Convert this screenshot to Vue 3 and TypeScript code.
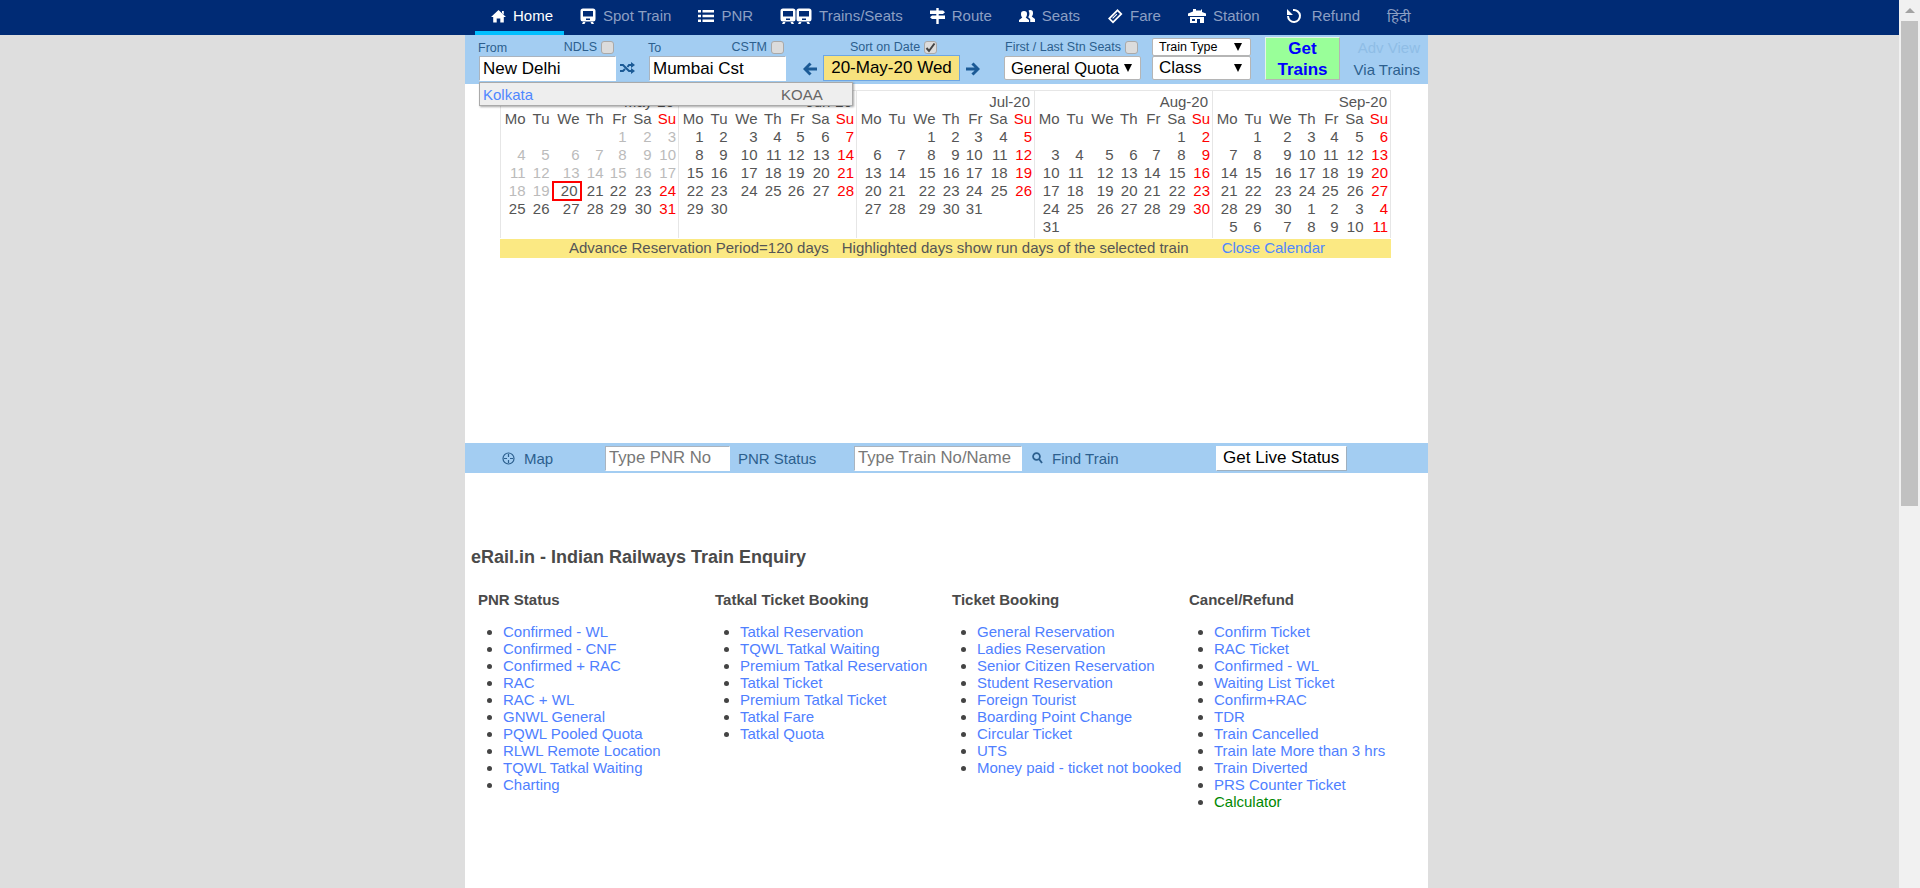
<template>
  <div class="screen">
    <div class="viewport">
      <header class="topbar">
        <nav class="nav">
          <a v-for="item in navItems" :key="item.label" class="nav-item" :class="{ active: item.active }" href="#">
            <svg v-if="item.d" class="nav-icon" :width="item.w" height="16" :viewBox="`0 0 ${item.vw} 16`" fill="currentColor">
              <path :d="item.d" fill-rule="evenodd" />
            </svg>
            <span>{{ item.label }}</span>
          </a>
        </nav>
      </header>

      <main class="page">
        <form class="query-bar" @submit.prevent>
          <div class="field">
            <div class="label-row">
              <span class="from-label">From</span>
              <span class="station-code">NDLS<span class="cb"></span></span>
            </div>
            <input class="text-input" value="New Delhi" />
          </div>
          <div class="swap">
            <svg width="15" height="12" viewBox="0 0 15 12">
              <path d="M0 3h3l6 6h3M0 9h3l2-2M7.500 5L9 3h3" fill="none" stroke="currentColor" stroke-width="2" />
              <path d="M11 0l4 3-4 3zM11 6l4 3-4 3z" fill="currentColor" />
            </svg>
          </div>
          <div class="field">
            <div class="label-row">
              <span class="from-label">To</span>
              <span class="station-code">CSTM<span class="cb"></span></span>
            </div>
            <input class="text-input" value="Mumbai Cst" />
          </div>
          <div class="date-group">
            <div class="label-row centered">
              <span class="station-code">Sort on Date<span class="cb">
                <svg width="11" height="11" viewBox="0 0 11 11"><path d="M1.500 6l2.500 3L9.500 1.500" fill="none" stroke="#444" stroke-width="2" /></svg>
              </span></span>
            </div>
            <div class="date-row">
              <svg class="arrow" width="14" height="14" viewBox="0 0 13 12" fill="currentColor"><path d="M6 0l2 1.800L5 4.700h8v2.600H5l3 2.900L6 12 0 6z" /></svg>
              <div class="date-box">20-May-20 Wed</div>
              <svg class="arrow" width="14" height="14" viewBox="0 0 13 12" fill="currentColor"><path d="M7 0L5 1.800 8 4.700H0v2.600h8l-3 2.900L7 12l6-6z" /></svg>
            </div>
          </div>
          <div class="quota-group">
            <div class="label-row">
              <span class="station-code">First / Last Stn Seats<span class="cb"></span></span>
            </div>
            <div class="fake-select quota">General Quota<i class="caret"></i></div>
          </div>
          <div class="type-group">
            <div class="fake-select small">Train Type<i class="caret"></i></div>
            <div class="fake-select">Class<i class="caret"></i></div>
          </div>
          <button class="get-trains" type="button">Get<br />Trains</button>
          <div class="via-group">
            <span class="adv">Adv View</span>
            <span class="via">Via Trains</span>
          </div>

          <div class="suggest">
            <a href="#">Kolkata</a>
            <span>KOAA</span>
          </div>
        </form>

        <section class="calendar">
          <div class="months">
            <div v-for="month in months" :key="month.title" class="month">
              <div class="month-title">{{ month.title }}</div>
              <div class="month-grid">
                <span v-for="day in weekDays" :key="day" class="cell" :class="{ sun: day === 'Su' }">{{ day }}</span>
                <span
                  v-for="(cell, i) in month.cells"
                  :key="i"
                  class="cell"
                  :class="{ sun: i % 7 === 6 && cell.n, past: cell.past, today: cell.today }"
                >{{ cell.n }}</span>
              </div>
            </div>
          </div>
          <div class="cal-foot">
            <span>Advance Reservation Period=120 days</span>
            <span class="foot-second">Highlighted days show run days of the selected train</span>
            <a class="foot-close" href="#">Close Calendar</a>
          </div>
        </section>

        <div class="status-bar">
          <a class="status-link map-link" href="#">
            <svg width="13" height="13" viewBox="0 0 13 13" fill="none" stroke="currentColor" stroke-width="1.200">
              <circle cx="6.500" cy="6.500" r="5.500" />
              <path d="M6.500 2v3M6.500 8v3M2 6.500h3M8 6.500h3" />
            </svg>
            Map
          </a>
          <input class="status-input pnr" placeholder="Type PNR No" />
          <a class="status-link pnr-link" href="#">PNR Status</a>
          <input class="status-input train" placeholder="Type Train No/Name" />
          <a class="status-link find-link" href="#">
            <svg width="11" height="12" viewBox="0 0 11 12" fill="none" stroke="currentColor" stroke-width="1.800">
              <circle cx="4.500" cy="4.500" r="3.400" />
              <path d="M7 7l3 4" />
            </svg>
            Find Train
          </a>
          <button class="live-btn" type="button">Get Live Status</button>
        </div>

        <h1 class="site-title">eRail.in - Indian Railways Train Enquiry</h1>

        <div class="link-columns">
          <div v-for="col in linkColumns" :key="col.title" class="link-col">
            <h2>{{ col.title }}</h2>
            <ul>
              <li v-for="link in col.links" :key="link"><a href="#" :class="{ calc: link === 'Calculator' }">{{ link }}</a></li>
            </ul>
          </div>
        </div>
      </main>
    </div>

    <div class="scrollbar">
      <div class="scroll-up"><i></i></div>
      <div class="scroll-thumb"></div>
    </div>
  </div>
</template>

<script setup lang="ts">
interface NavItem {
  label: string
  d?: string
  w?: number
  vw?: number
  active?: boolean
}

interface DayCell {
  n: number | ''
  past?: boolean
  today?: boolean
}

const trainShape = (x: number) =>
  `M${x + 3} .5h10a2.500 2.500 0 0 1 2.500 2.500v8a2.500 2.500 0 0 1-2.500 2.500h-10a2.500 2.500 0 0 1-2.500-2.500v-8a2.500 2.500 0 0 1 2.500-2.500zM${x + 3} 3v5.500h10V3zM${x + 6} 10.500v1.500h4v-1.500zM${x + 3} 14h2.500l-1 2h-2.500zM${x + 10.500} 14h2.500l1 2h-2.500z`

const navItems: NavItem[] = [
  { label: 'Home', active: true, w: 15, vw: 15, d: 'M7.500 2L15 9h-2.200v5.500H9.300v-4H5.700v4H2.200V9H0zM11 3h1.800v3.500L11 5z' },
  { label: 'Spot Train', w: 16, vw: 16, d: trainShape(0) },
  { label: 'PNR', w: 16, vw: 16, d: 'M0 2h3v2.500H0zM4.500 2H16v2.500H4.500zM0 6.800h3v2.500H0zM4.500 6.800H16v2.500H4.500zM0 11.500h3V14H0zM4.500 11.500H16V14H4.500z' },
  { label: 'Trains/Seats', w: 32, vw: 32, d: trainShape(0) + trainShape(16) },
  { label: 'Route', w: 15, vw: 15, d: 'M6.300 0h2.400v2.500H13l2 1.700-2 1.700H8.700v1.600H15v3.400H8.700V16H6.300v-5.100H2L0 9.200l2-1.700h4.300V5.900H0V2.500h6.300z' },
  { label: 'Seats', w: 16, vw: 16, d: 'M5 3a3 3 0 0 1 3 3.200c0 1.300-.5 2.500-1.300 3.300L10 12v2H0v-2l3.300-2.500C2.500 8.700 2 7.500 2 6.200A3 3 0 0 1 5 3zM11 2a3 3 0 0 1 3 3.200c0 1.300-.5 2.500-1.300 3.300L16 11v3h-4.800v-3l-2-1.800c.8-1 1.200-2.200 1.200-3.500 0-1.200-.3-2.200-.9-3 .4-.4 1-.7 1.500-.7z' },
  { label: 'Fare', w: 16, vw: 16, d: 'M10.500 1L15.500 6 6 15.500 1 10.500zM10.500 3.500L3.500 10.500 6 13l7-7zM9.500 5.700l.8.800-4.300 4.300-.8-.8z' },
  { label: 'Station', w: 18, vw: 18, d: 'M5 1h3v1.500h5V1.500h1V4l4 1.500V8H0V5.500L5 3.500zM2 9h14v6h-4v-4H9v4H2zM4 11v2h3v-2z' },
  { label: 'Refund', w: 18, vw: 18, d: 'M6 1.070A7 7 0 1 1 0 8H2A5 5 0 1 0 6 3.100zM0 1v6h6z' },
  { label: 'हिंदी' },
]

const weekDays = ['Mo', 'Tu', 'We', 'Th', 'Fr', 'Sa', 'Su']

function buildMonth(title: string, offset: number, days: number, extra = 0, todayAt = 0): { title: string; cells: DayCell[] } {
  const cells: DayCell[] = []
  for (let i = 0; i < offset; i++) cells.push({ n: '' })
  for (let d = 1; d <= days; d++) {
    cells.push({ n: d, past: d < todayAt, today: d === todayAt })
  }
  for (let d = 1; d <= extra; d++) cells.push({ n: d })
  return { title, cells }
}

const months = [
  buildMonth('May-20', 4, 31, 0, 20),
  buildMonth('Jun-20', 0, 30),
  buildMonth('Jul-20', 2, 31),
  buildMonth('Aug-20', 5, 31),
  buildMonth('Sep-20', 1, 30, 11),
]

const linkColumns = [
  {
    title: 'PNR Status',
    links: ['Confirmed - WL', 'Confirmed - CNF', 'Confirmed + RAC', 'RAC', 'RAC + WL', 'GNWL General', 'PQWL Pooled Quota', 'RLWL Remote Location', 'TQWL Tatkal Waiting', 'Charting'],
  },
  {
    title: 'Tatkal Ticket Booking',
    links: ['Tatkal Reservation', 'TQWL Tatkal Waiting', 'Premium Tatkal Reservation', 'Tatkal Ticket', 'Premium Tatkal Ticket', 'Tatkal Fare', 'Tatkal Quota'],
  },
  {
    title: 'Ticket Booking',
    links: ['General Reservation', 'Ladies Reservation', 'Senior Citizen Reservation', 'Student Reservation', 'Foreign Tourist', 'Boarding Point Change', 'Circular Ticket', 'UTS', 'Money paid - ticket not booked'],
  },
  {
    title: 'Cancel/Refund',
    links: ['Confirm Ticket', 'RAC Ticket', 'Confirmed - WL', 'Waiting List Ticket', 'Confirm+RAC', 'TDR', 'Train Cancelled', 'Train late More than 3 hrs', 'Train Diverted', 'PRS Counter Ticket', 'Calculator'],
  },
]
</script>

<style>
html,
body {
  margin: 0;
  height: 100%;
  overflow: hidden;
  background: #dedede;
}
</style>

<style scoped>
.screen {
  display: flex;
  height: 888px;
  overflow: hidden;
  font-family: "Liberation Sans", Arial, "Noto Sans", sans-serif;
  color: #555;
}

.viewport {
  flex: 1;
  min-width: 0;
}

.topbar {
  height: 35px;
  background: #002b75;
}

.nav {
  display: flex;
  height: 35px;
  padding-left: 475px;
}

.nav-item {
  display: flex;
  align-items: center;
  gap: 7px;
  height: 31px;
  padding: 0 11px 0 16px;
  color: #8c9fc3;
  font-size: 15px;
  text-decoration: none;
  border-bottom: 4px solid transparent;
}

.nav-item.active {
  color: #fff;
  border-bottom-color: #00bfff;
}

.nav-icon {
  color: #fff;
}

.page {
  width: 963px;
  margin-left: 465px;
  height: 853px;
  background: #fff;
}

.query-bar {
  position: relative;
  display: flex;
  height: 47px;
  padding: 2px 0 0 14px;
  background: #a3cdf2;
  color: #2c5f8e;
  font-size: 12.500px;
}

.field {
  width: 137px;
  padding-top: 1px;
}

.label-row {
  display: flex;
  justify-content: space-between;
  align-items: center;
  height: 18px;
  white-space: nowrap;
}

.label-row.centered {
  justify-content: center;
  padding-left: 2px;
}

.from-label {
  margin-left: -1px;
  padding-top: 2px;
}

.station-code {
  display: flex;
  align-items: center;
  gap: 4px;
}

.field .station-code {
  margin-right: 2px;
}

.cb {
  display: inline-flex;
  align-items: center;
  justify-content: center;
  box-sizing: border-box;
  width: 13px;
  height: 13px;
  border: 1px solid #a9a9a9;
  border-radius: 3px;
  background: #dcdcdc;
}

.text-input {
  display: block;
  box-sizing: border-box;
  width: 137px;
  height: 25px;
  padding: 0 3px;
  border: 1px solid #fff;
  border-top-color: #aab4bf;
  border-left-color: #aab4bf;
  background: #fff;
  color: #000;
  font: 17px "Liberation Sans", Arial, sans-serif;
  outline: none;
}

.swap {
  width: 33px;
  padding: 25px 0 0 4px;
  box-sizing: border-box;
  color: #1b5a96;
}

.date-group {
  width: 179px;
  margin-left: 17px;
  padding-top: 1px;
}

.date-row {
  display: flex;
  align-items: center;
  gap: 6px;
}

.arrow {
  color: #1b5a96;
  flex: none;
  margin-top: 1px;
}

.date-box {
  box-sizing: border-box;
  width: 137px;
  height: 26px;
  margin-top: -1px;
  border: 1px solid #6ea6e4;
  background: #f7e27e;
  color: #000;
  font-size: 17px;
  line-height: 24px;
  text-align: center;
}

.quota-group {
  width: 137px;
  margin-left: 22px;
  padding-top: 1px;
}

.quota-group .label-row {
  padding-right: 3px;
  padding-left: 1px;
}

.fake-select {
  display: flex;
  justify-content: space-between;
  align-items: center;
  box-sizing: border-box;
  height: 24px;
  padding: 0 8px 0 6px;
  border: 1px solid #b5b5b5;
  border-radius: 2px;
  background: #fff;
  color: #000;
  font-size: 17px;
  white-space: nowrap;
}

.fake-select.quota {
  font-size: 16.500px;
}

.fake-select.small {
  height: 18px;
  font-size: 12.500px;
}

.caret {
  flex: none;
  width: 0;
  height: 0;
  border-left: 4px solid transparent;
  border-right: 4px solid transparent;
  border-top: 8px solid #000;
}

.type-group {
  width: 99px;
  margin-left: 11px;
  padding-top: 1px;
}

.get-trains {
  box-sizing: border-box;
  width: 75px;
  height: 43px;
  margin-left: 14px;
  padding: 0;
  border: 1px solid #b4b4b4;
  border-top-color: #e6f5e6;
  border-left-color: #e6f5e6;
  background: #9f9;
  color: #00f;
  font: bold 17px/21px "Liberation Sans", Arial, sans-serif;
}

.via-group {
  display: flex;
  flex-direction: column;
  align-items: flex-end;
  width: 80px;
  font-size: 15px;
  line-height: 22px;
}

.adv {
  color: #8fbde6;
}

.via {
  color: #2c5f8e;
}

.suggest {
  position: absolute;
  top: 47px;
  left: 14px;
  z-index: 2;
  display: flex;
  box-sizing: border-box;
  width: 374px;
  height: 24px;
  padding: 0 0 0 3px;
  align-items: center;
  border: 1px solid #aaa;
  background: #eee;
  box-shadow: 1px 1px 2px rgba(0, 0, 0, 0.35);
  font-size: 15px;
  color: #666;
}

.suggest a {
  width: 298px;
  color: #4f87ff;
  text-decoration: none;
}

.calendar {
  width: 891px;
  margin: 6px 0 0 35px;
}

.months {
  display: grid;
  grid-template-columns: repeat(5, 178px);
  border: solid #e6e6e6;
  border-width: 1px 1px 0 1px;
  box-sizing: border-box;
  width: 891px;
}

.month {
  height: 147px;
  padding-top: 2px;
  box-sizing: border-box;
  border-right: 1px solid #e6e6e6;
}

.month:last-child {
  border-right: 0;
}

.month-title {
  height: 17px;
  padding-right: 4px;
  font-size: 15px;
  line-height: 18px;
  text-align: right;
}

.month-grid {
  display: grid;
  grid-template-columns: 24.500px 24px 30px 24px 23px 25px 24.500px;
  grid-auto-rows: 18px;
}

.cell {
  font-size: 15px;
  line-height: 18px;
  text-align: right;
}

.cell.sun {
  color: #f00;
}

.cell.past {
  color: #bbb;
}

.cell.today {
  box-sizing: border-box;
  margin: -1px -2px -1px 2px;
  padding-right: 2px;
  border: 2px solid #f00;
  line-height: 16px;
}

.cal-foot {
  height: 19px;
  margin-top: 1px;
  padding-left: 69px;
  background: #fbe983;
  font-size: 15px;
  line-height: 18px;
  white-space: nowrap;
}

.foot-second {
  margin-left: 13px;
}

.foot-close {
  margin-left: 33px;
  color: #4f87ff;
  text-decoration: none;
}

.status-bar {
  display: flex;
  align-items: center;
  height: 30px;
  margin-top: 185px;
  background: #a3cdf2;
  font-size: 15px;
}

.status-link {
  display: flex;
  align-items: center;
  gap: 9px;
  color: #2c5f8e;
  text-decoration: none;
}

.map-link {
  margin-left: 37px;
  width: 103px;
}

.status-input {
  box-sizing: border-box;
  height: 25px;
  padding: 0 3px;
  border: 1px solid #fff;
  border-top-color: #aab4bf;
  border-left-color: #aab4bf;
  background: #fff;
  font: 16.700px "Liberation Sans", Arial, sans-serif;
  outline: none;
}

.status-input::placeholder {
  color: #777;
}

.status-input.pnr {
  width: 125px;
}

.status-input.train {
  width: 168px;
}

.pnr-link {
  width: 116px;
  margin-left: 8px;
}

.find-link {
  margin-left: 10px;
}

.live-btn {
  box-sizing: border-box;
  width: 131px;
  height: 25px;
  margin-left: 97px;
  padding: 0;
  border: 1px solid #fff;
  border-right-color: #9fb0bf;
  border-bottom-color: #9fb0bf;
  background: #fff;
  color: #000;
  font: 17px "Liberation Sans", Arial, sans-serif;
}

.site-title {
  margin: 73px 0 0 6px;
  color: #4a4a4a;
  font-size: 18px;
  line-height: 22px;
  font-weight: bold;
}

.link-columns {
  display: grid;
  grid-template-columns: repeat(4, 237px);
  margin-top: 23px;
  padding-left: 13px;
}

.link-col h2 {
  margin: 0;
  color: #4a4a4a;
  font-size: 15px;
  line-height: 18px;
}

.link-col ul {
  margin: 14px 0 0;
  padding-left: 25px;
  color: #444;
  font-size: 15px;
  line-height: 17px;
}

.link-col a {
  color: #4f7fff;
  text-decoration: none;
}

.link-col a.calc {
  color: #080;
}

.scrollbar {
  flex: none;
  width: 21px;
  background: #f1f1f1;
}

.scroll-up {
  display: flex;
  justify-content: center;
  align-items: center;
  height: 21px;
}

.scroll-up i {
  width: 0;
  height: 0;
  border-left: 5px solid transparent;
  border-right: 5px solid transparent;
  border-bottom: 5px solid #a3a3a3;
}

.scroll-thumb {
  height: 485px;
  margin: 0 2px;
  background: #c1c1c1;
}
</style>
